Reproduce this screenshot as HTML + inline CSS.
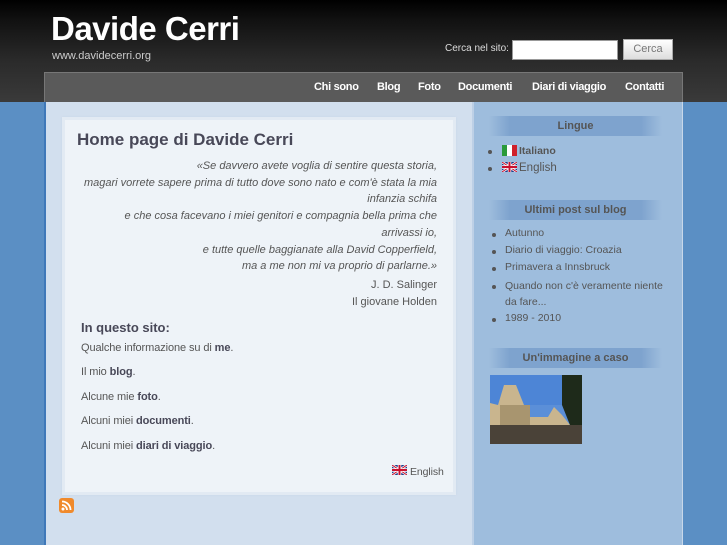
<!DOCTYPE html>
<html><head><meta charset="utf-8"><style>
*{margin:0;padding:0;box-sizing:border-box}
body{width:727px;height:545px;overflow:hidden;font-family:"Liberation Sans",sans-serif;background:#5b8fc4;position:relative;color:#555}
#top{position:absolute;left:0;top:0;width:727px;height:102px;background:linear-gradient(#000 0,#111 20px,#2a2a2a 60px,#3a3a3a 102px)}
#title{position:absolute;left:51px;top:10px;color:#fff;font-size:33px;font-weight:bold;letter-spacing:-0.5px}
#url{position:absolute;left:52px;top:50px;color:#ccc;font-size:11px}
#srch{position:absolute;left:445px;top:43px;color:#ddd;font-size:10px}
#inp{position:absolute;left:512px;top:40px;width:106px;height:20px;background:#fff;border:1px solid #999}
#btn{position:absolute;left:623px;top:39px;width:50px;height:21px;background:linear-gradient(#fff,#ddd);border:1px solid #aaa;color:#777;font-size:11px;text-align:center;line-height:19px}
#nav{position:absolute;left:44px;top:72px;width:639px;height:30px;background:#5a5a5a;border:1px solid #777;border-bottom:none}
#nav span{position:absolute;top:8px;color:#fff;font-size:11px;font-weight:bold;letter-spacing:-0.3px}
#main{position:absolute;left:44px;top:102px;width:428px;height:443px;background:#d2dfee;border-left:2px solid #3f78b8}
#side{position:absolute;left:472px;top:102px;width:211px;height:443px;background:#9ebddd;border-right:1px solid #c8d8ea;border-left:2px solid #bdd0e6}
#box{position:absolute;left:62px;top:117px;width:394px;height:378px;background:#eef3f8;border:3px solid #e2eaf3;box-shadow:0 0 2px #c8d6e6}
h1{position:absolute;left:77px;top:130px;font-size:17px;color:#484858;font-weight:bold}
#q{position:absolute;left:40px;top:158px;width:397px;text-align:right;font-style:italic;font-size:11px;line-height:16.7px;color:#555;white-space:nowrap}
#au{position:absolute;left:70px;top:277px;width:367px;text-align:right;font-size:11px;line-height:16.5px;color:#555}
h2{position:absolute;left:81px;top:320px;font-size:13px;color:#484858;font-weight:bold}
.p{position:absolute;left:81px;font-size:11px;color:#555;letter-spacing:-0.1px}
.p b{color:#484858}
.hd{position:absolute;left:489px;width:173px;height:20px;background:linear-gradient(90deg,rgba(126,163,206,0),#7ea3ce 12%,#7ea3ce 88%,rgba(126,163,206,0));text-align:center;font-size:11px;font-weight:bold;color:#555;line-height:20px}
.li{position:absolute;left:505px;font-size:10.5px;color:#555}
.dot{position:absolute;left:490px;width:4px;height:4px;border-radius:2px;background:#555}
</style></head><body>
<div id="top"></div>
<div id="title">Davide Cerri</div>
<div id="url">www.davidecerri.org</div>
<div id="srch">Cerca nel sito:</div>
<div id="inp"></div>
<div id="btn">Cerca</div>
<div id="main"></div>
<div id="side"></div>
<div id="nav"><span style="left:269px">Chi sono</span><span style="left:332px">Blog</span><span style="left:373px">Foto</span><span style="left:413px">Documenti</span><span style="left:487px">Diari di viaggio</span><span style="left:580px">Contatti</span></div>
<div id="box"></div>
<h1>Home page di Davide Cerri</h1>
<div id="q">«Se davvero avete voglia di sentire questa storia,<br>magari vorrete sapere prima di tutto dove sono nato e com'è stata la mia<br>infanzia schifa<br>e che cosa facevano i miei genitori e compagnia bella prima che<br>arrivassi io,<br>e tutte quelle baggianate alla David Copperfield,<br>ma a me non mi va proprio di parlarne.»</div>
<div id="au">J. D. Salinger<br>Il giovane Holden</div>
<h2>In questo sito:</h2>
<div class="p" style="top:342px">Qualche informazione su di <b>me</b>.</div>
<div class="p" style="top:366px">Il mio <b>blog</b>.</div>
<div class="p" style="top:391px">Alcune mie <b>foto</b>.</div>
<div class="p" style="top:415px">Alcuni miei <b>documenti</b>.</div>
<div class="p" style="top:440px">Alcuni miei <b>diari di viaggio</b>.</div>
<svg style="position:absolute;left:392px;top:465px" width="15" height="10" viewBox="0 0 15 10"><rect width="15" height="10" fill="#1f3d8a"/><path d="M0 0L15 10M15 0L0 10" stroke="#fff" stroke-width="2.5"/><path d="M0 0L15 10M15 0L0 10" stroke="#c8102e" stroke-width="1"/><path d="M7.5 0V10M0 5H15" stroke="#fff" stroke-width="3.5"/><path d="M7.5 0V10M0 5H15" stroke="#c8102e" stroke-width="2"/></svg>
<div class="p" style="left:410px;top:466px;font-size:10.5px">English</div>
<div style="position:absolute;left:59px;top:498px;width:15px;height:15px;border-radius:3px;background:#f08a2c"><svg width="15" height="15" viewBox="0 0 15 15"><circle cx="4" cy="11" r="1.5" fill="#fff"/><path d="M3 7a5 5 0 0 1 5 5M3 3.5a8.5 8.5 0 0 1 8.5 8.5" stroke="#fff" stroke-width="1.8" fill="none"/></svg></div>
<div class="hd" style="top:116px">Lingue</div>
<div class="dot" style="left:488px;top:150px"></div>
<div class="dot" style="left:488px;top:167px"></div>
<svg style="position:absolute;left:502px;top:145px" width="15" height="11"><rect width="5" height="11" fill="#2a9a3a"/><rect x="5" width="5" height="11" fill="#fff"/><rect x="10" width="5" height="11" fill="#d0202a"/></svg>
<div class="li" style="left:519px;top:145px;font-weight:bold">Italiano</div>
<svg style="position:absolute;left:502px;top:162px" width="15" height="10" viewBox="0 0 15 10"><rect width="15" height="10" fill="#1f3d8a"/><path d="M0 0L15 10M15 0L0 10" stroke="#fff" stroke-width="2.5"/><path d="M0 0L15 10M15 0L0 10" stroke="#c8102e" stroke-width="1"/><path d="M7.5 0V10M0 5H15" stroke="#fff" stroke-width="3.5"/><path d="M7.5 0V10M0 5H15" stroke="#c8102e" stroke-width="2"/></svg>
<div class="li" style="left:519px;top:162px;font-size:11.5px">English</div>
<div class="hd" style="top:200px">Ultimi post sul blog</div>
<div class="dot" style="left:492px;top:233px"></div><div class="li" style="top:227px">Autunno</div>
<div class="dot" style="left:492px;top:250px"></div><div class="li" style="top:244px">Diario di viaggio: Croazia</div>
<div class="dot" style="left:492px;top:267px"></div><div class="li" style="top:261px">Primavera a Innsbruck</div>
<div class="dot" style="left:492px;top:285px"></div><div class="li" style="top:279px;line-height:15.5px;width:160px">Quando non c'è veramente niente da fare...</div>
<div class="dot" style="left:492px;top:318px"></div><div class="li" style="top:312px">1989 - 2010</div>
<div class="hd" style="top:348px">Un'immagine a caso</div>
<svg style="position:absolute;left:490px;top:375px" width="92" height="69" viewBox="0 0 92 69"><rect width="92" height="69" fill="#5b8fd8"/><rect width="92" height="30" fill="#4d85d6"/><path d="M0 28L8 30L14 10L26 10L34 30L40 42L58 42L64 32L72 40L80 50L92 45V69H0Z" fill="#c9b58e"/><path d="M72 0H92V50H80L72 30Z" fill="#1e2a1a"/><path d="M0 50H92V69H0Z" fill="#4a4238"/><path d="M10 30h30v20h-30z" fill="#a8956f"/></svg>
</body></html>
